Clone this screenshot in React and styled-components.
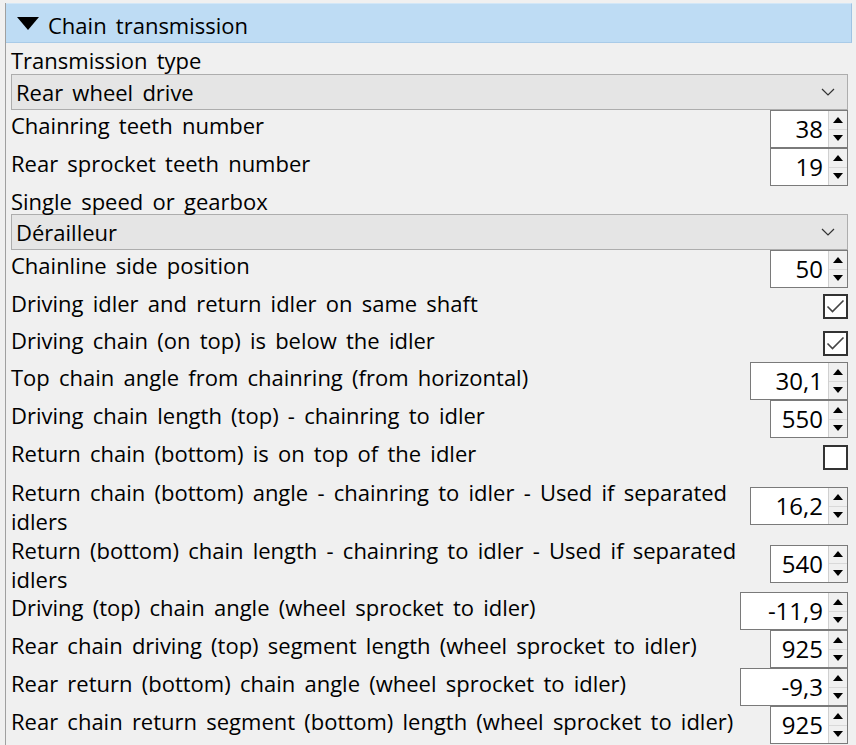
import React from 'react';
import styled, { createGlobalStyle } from 'styled-components';

const GlobalStyle = createGlobalStyle`
    body {
        margin: 0;
        background: #f0f0f0;
        font-family: "Open Sans", "Noto Sans", sans-serif;
        font-size: 22px;
        word-spacing: 3.5px;
        color: #000;
    }
`;

const Panel = styled.div`
    margin: 3px 0 0 5px;
    width: 846px;
    border-left: 1px solid #a0a0a0;
    height: 742px;
    overflow: hidden;
`;

const Header = styled.div`
    height: 38px;
    display: flex;
    align-items: center;
    gap: 9px;
    padding-left: 11px;
    background: #bedcf4;
    border-top: 1px solid #d3e7f7;
    border-right: 1px solid #9fc3e3;
    border-bottom: 1px solid #a9cbe8;
    line-height: 29px;
    margin-bottom: 2px;
`;

const HeaderText = styled.span`
    padding-top: 4px;
`;

const Body = styled.div`
    padding: 0 4px 0 5px;
`;

const Row = styled.div`
    height: ${p => p.$h}px;
    display: flex;
    align-items: center;
    justify-content: space-between;
`;

const Label = styled.div`
    align-self: flex-start;
    line-height: 29px;
    white-space: pre-line;
    margin-top: 1px;
`;

const Combo = styled.div`
    height: 34px;
    display: flex;
    align-items: center;
    justify-content: space-between;
    padding: 0 12px 0 4px;
    background: #e5e5e5;
    border: 1px solid #adadad;
    line-height: 29px;
`;

const Spin = styled.div`
    width: ${p => p.$w}px;
    height: 38px;
    box-sizing: border-box;
    display: flex;
    background: #fff;
    border: 1px solid #7a7a7a;
`;

const SpinValue = styled.div`
    flex: 1;
    text-align: right;
    padding-right: 5px;
    font-size: 24px;
    line-height: 35px;
`;

const Arrows = styled.div`
    width: 18px;
    display: flex;
    flex-direction: column;
    border-left: 1px solid #d0d0d0;
    background: #f0f0f0;
`;

const ArrowBtn = styled.div`
    flex: 1;
    display: flex;
    align-items: center;
    justify-content: center;
    border-bottom: ${p => (p.$top ? '1px solid #d9d9d9' : 'none')};
`;

const Check = styled.div`
    width: 21px;
    height: 21px;
    border: 2px solid #333;
    background: #fff;
    display: flex;
    align-items: center;
    justify-content: center;
`;

const Triangle = () => (
    <svg width="22" height="13" viewBox="0 0 22 13">
        <polygon points="0,0 22,0 11,13" fill="#000" />
    </svg>
);

const Chevron = () => (
    <svg width="14" height="8" viewBox="0 0 14 8">
        <polyline points="1,1 7,7 13,1" fill="none" stroke="#333" strokeWidth="1.2" />
    </svg>
);

const SpinBox = ({ value, w }) => (
    <Spin $w={w}>
        <SpinValue>{value}</SpinValue>
        <Arrows>
            <ArrowBtn $top>
                <svg width="10" height="6" viewBox="0 0 10 6"><polygon points="0,6 10,6 5,0" fill="#000" /></svg>
            </ArrowBtn>
            <ArrowBtn>
                <svg width="10" height="6" viewBox="0 0 10 6"><polygon points="0,0 10,0 5,6" fill="#000" /></svg>
            </ArrowBtn>
        </Arrows>
    </Spin>
);

const CheckBox = ({ checked }) => (
    <Check>
        {checked && (
            <svg width="19" height="15" viewBox="0 0 19 15">
                <polyline points="1.5,7.5 6.5,12.5 17.5,1.5" fill="none" stroke="#444" strokeWidth="1.6" />
            </svg>
        )}
    </Check>
);

const rows = [
    { kind: 'label', h: 29, text: 'Transmission type' },
    { kind: 'combo', text: 'Rear wheel drive' },
    { kind: 'spin', h: 38, text: 'Chainring teeth number', value: '38', w: 78 },
    { kind: 'spin', h: 38, text: 'Rear sprocket teeth number', value: '19', w: 78 },
    { kind: 'label', h: 28, text: 'Single speed or gearbox' },
    { kind: 'combo', text: 'Dérailleur' },
    { kind: 'spin', h: 38, text: 'Chainline side position', value: '50', w: 78 },
    { kind: 'check', h: 37, text: 'Driving idler and return idler on same shaft', checked: true },
    { kind: 'check', h: 37, text: 'Driving chain (on top) is below the idler', checked: true },
    { kind: 'spin', h: 38, text: 'Top chain angle from chainring (from horizontal)', value: '30,1', w: 98 },
    { kind: 'spin', h: 38, text: 'Driving chain length (top) - chainring to idler', value: '550', w: 78 },
    { kind: 'check', h: 39, text: 'Return chain (bottom) is on top of the idler', checked: false },
    { kind: 'spin', h: 58, text: 'Return chain (bottom) angle - chainring to idler - Used if separated\nidlers', value: '16,2', w: 98 },
    { kind: 'spin', h: 57, text: 'Return (bottom) chain length - chainring to idler - Used if separated\nidlers', value: '540', w: 78 },
    { kind: 'spin', h: 38, text: 'Driving (top) chain angle (wheel sprocket to idler)', value: '-11,9', w: 108 },
    { kind: 'spin', h: 38, text: 'Rear chain driving (top) segment length (wheel sprocket to idler)', value: '925', w: 78 },
    { kind: 'spin', h: 38, text: 'Rear return (bottom) chain angle (wheel sprocket to idler)', value: '-9,3', w: 108 },
    { kind: 'spin', h: 38, text: 'Rear chain return segment (bottom) length (wheel sprocket to idler)', value: '925', w: 78 },
];

const FieldRow = ({ row }) => {
    if (row.kind === 'combo') {
        return (
            <Combo>
                <span>{row.text}</span>
                <Chevron />
            </Combo>
        );
    }
    if (row.kind === 'label') {
        return (
            <Row $h={row.h}>
                <Label>{row.text}</Label>
            </Row>
        );
    }
    return (
        <Row $h={row.h}>
            <Label>{row.text}</Label>
            {row.kind === 'spin' ? <SpinBox value={row.value} w={row.w} /> : <CheckBox checked={row.checked} />}
        </Row>
    );
};

const App = () => {
    return (
        <>
            <GlobalStyle />
            <Panel>
                <Header>
                    <Triangle />
                    <HeaderText>Chain transmission</HeaderText>
                </Header>
                <Body>
                    {rows.map((row, i) => <FieldRow key={i} row={row} />)}
                </Body>
            </Panel>
        </>
    );
};

export default App;
